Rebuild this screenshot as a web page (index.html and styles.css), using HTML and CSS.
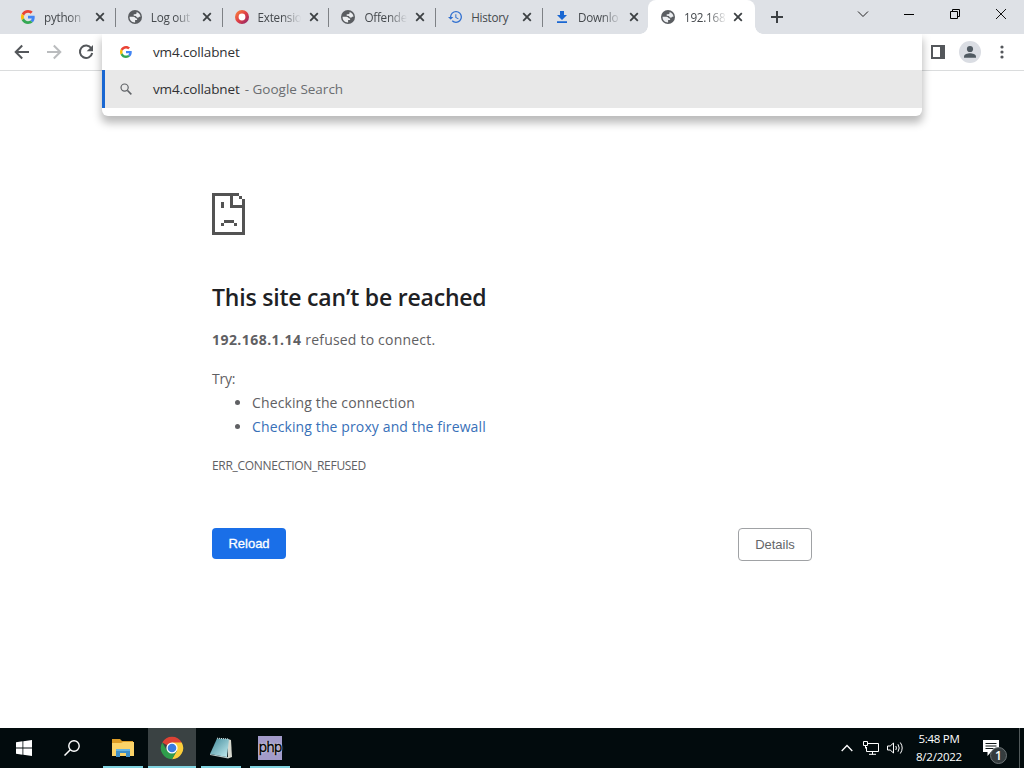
FILE: index.html
```html
<!DOCTYPE html>
<html lang="en">
<head>
    <meta charset="UTF-8">
    <meta name="viewport" content="width=device-width, initial-scale=1.0">
    <title>192.168.1.14</title>
    <link rel="stylesheet" href="styles.css">
</head>
<body>
    <!-- shared icons -->
    <svg class="defs" width="0" height="0">
        <symbol id="google" viewBox="0 0 48 48">
            <path fill="#EA4335" d="M24 9.5c3.54 0 6.71 1.22 9.21 3.6l6.85-6.85C35.9 2.38 30.47 0 24 0 14.62 0 6.51 5.38 2.56 13.22l7.98 6.19C12.43 13.72 17.74 9.5 24 9.5z"/>
            <path fill="#4285F4" d="M46.98 24.55c0-1.57-.15-3.09-.38-4.55H24v9.02h12.94c-.58 2.96-2.26 5.48-4.78 7.18l7.73 6c4.51-4.18 7.09-10.36 7.09-17.65z"/>
            <path fill="#FBBC05" d="M10.53 28.59A14.5 14.5 0 0 1 9.77 24c0-1.6.27-3.14.76-4.59l-7.98-6.19A23.9 23.9 0 0 0 0 24c0 3.88.92 7.54 2.56 10.78l7.97-6.19z"/>
            <path fill="#34A853" d="M24 48c6.48 0 11.93-2.13 15.89-5.81l-7.73-6c-2.15 1.45-4.92 2.3-8.16 2.3-6.26 0-11.57-4.22-13.47-9.91l-7.98 6.19C6.51 42.62 14.62 48 24 48z"/>
        </symbol>
        <symbol id="globe" viewBox="0 0 14 14">
            <circle cx="7" cy="7" r="7" fill="#5a5d61"/>
            <path fill="#eceef1" d="M1.600 6.800h3.900c1.600 0 1.700 1.500 2.700 1.700h.9v1.600H7.100v2.300c-3.400.1-5.700-2.400-5.500-5.600z"/>
            <path fill="#eceef1" d="M8.600 1.900c2.200.6 3.700 2.400 3.900 4.800h-1.400c-.3.900-1.200 1.100-2 .8-.7-.3-1-.9-1.100-1.500L5.700 5.700V4.300h1.500c.9 0 1.400-.5 1.400-1.200z"/>
        </symbol>
        <symbol id="close" viewBox="0 0 10 10">
            <path d="M1.200 1.200l7.600 7.600M8.800 1.200L1.200 8.800" stroke="#3c4043" stroke-width="1.800"/>
        </symbol>
    </svg>

    <header class="tab-strip">
        <div class="tabs">
            <div class="tab">
                <svg class="favicon"><use href="#google"/></svg>
                <span class="tab-title">python</span>
                <svg class="tab-close"><use href="#close"/></svg>
            </div>
            <div class="tab">
                <svg class="favicon"><use href="#globe"/></svg>
                <span class="tab-title">Log out</span>
                <svg class="tab-close"><use href="#close"/></svg>
            </div>
            <div class="tab">
                <svg class="favicon" viewBox="0 0 14 14">
                    <defs>
                        <linearGradient id="ring" x1="0" y1="0" x2="1" y2="1">
                            <stop offset="0" stop-color="#f5793f"/>
                            <stop offset=".5" stop-color="#df3f46"/>
                            <stop offset="1" stop-color="#9c2a63"/>
                        </linearGradient>
                    </defs>
                    <circle cx="7" cy="7" r="5.200" fill="#fff" stroke="url(#ring)" stroke-width="3.600"/>
                </svg>
                <span class="tab-title">Extensio</span>
                <svg class="tab-close"><use href="#close"/></svg>
            </div>
            <div class="tab">
                <svg class="favicon"><use href="#globe"/></svg>
                <span class="tab-title">Offende</span>
                <svg class="tab-close"><use href="#close"/></svg>
            </div>
            <div class="tab">
                <svg class="favicon" viewBox="1 2.500 21 19">
                    <path fill="#2f6fd0" d="M13 3a9 9 0 0 0-9 9H1l3.890 3.890.07.14L9 12H6c0-3.870 3.130-7 7-7s7 3.130 7 7-3.130 7-7 7c-1.930 0-3.680-.79-4.940-2.060l-1.420 1.420A8.950 8.950 0 0 0 13 21a9 9 0 0 0 0-18zm-1 5v5l4.280 2.540.72-1.210-3.500-2.080V8H12z"/>
                </svg>
                <span class="tab-title full">History</span>
                <svg class="tab-close"><use href="#close"/></svg>
            </div>
            <div class="tab last">
                <svg class="favicon" viewBox="0 0 14 14">
                    <path fill="#1a67d2" d="M5 1h4v4h3L7 10 2 5h3zM2 11.300h10V13H2z"/>
                </svg>
                <span class="tab-title">Downlo</span>
                <svg class="tab-close"><use href="#close"/></svg>
            </div>
            <div class="tab active">
                <svg class="favicon"><use href="#globe"/></svg>
                <span class="tab-title">192.168</span>
                <svg class="tab-close"><use href="#close"/></svg>
            </div>
        </div>
        <svg class="new-tab" viewBox="0 0 12 12"><path d="M6 0v12M0 6h12" stroke="#3c4043" stroke-width="2"/></svg>
        <div class="window-controls">
            <svg viewBox="0 0 12 12"><path d="M1 3.500l5 5 5-5" fill="none" stroke="#222"/></svg>
            <svg viewBox="0 0 12 12"><path d="M1 6.500h10" stroke="#000"/></svg>
            <svg viewBox="0 0 12 12"><path d="M1.500 3.500h7v7h-7zM3.500 3.500v-2h7v7h-2" fill="none" stroke="#000"/></svg>
            <svg viewBox="0 0 12 12"><path d="M1 1l10 10M11 1L1 11" stroke="#111"/></svg>
        </div>
    </header>

    <nav class="toolbar">
        <div class="nav-buttons">
            <svg viewBox="0 0 16 16"><path d="M15 8H2M8.200 1.500L1.700 8l6.500 6.500" fill="none" stroke="#54575b" stroke-width="2"/></svg>
            <svg viewBox="0 0 16 16"><path d="M1 8h13M7.800 1.500L14.300 8l-6.500 6.500" fill="none" stroke="#babcbe" stroke-width="2"/></svg>
            <svg viewBox="0 0 16 16">
                <path d="M13.300 4.300A6.200 6.200 0 1 0 14.200 9" fill="none" stroke="#54575b" stroke-width="2"/>
                <path d="M15 1v6.300H8.700z" fill="#54575b"/>
            </svg>
        </div>
        <div class="omnibox">
            <div class="omnibox-row">
                <svg class="omnibox-icon"><use href="#google"/></svg>
                <span>vm4.collabnet</span>
            </div>
            <div class="omnibox-row selected">
                <svg class="omnibox-icon" viewBox="0 0 13 13">
                    <path d="M8 8l4.300 4.300" stroke="#606367" stroke-width="1.600"/>
                    <circle cx="5" cy="5" r="3.900" fill="none" stroke="#606367" stroke-width="1.300"/>
                </svg>
                <span>vm4.collabnet</span>
                <span class="hint">- Google Search</span>
            </div>
        </div>
        <div class="toolbar-right">
            <svg class="side-panel" viewBox="0 0 14 14"><path fill="#54575b" fill-rule="evenodd" d="M0 0h14v14H0zM2 2v10h7V2z"/></svg>
            <svg class="avatar" viewBox="0 0 22 22">
                <circle cx="11" cy="11" r="11" fill="#dadde3"/>
                <circle cx="11" cy="8" r="3.100" fill="#505a62"/>
                <path fill="#505a62" d="M5 16.800v-1.300c0-2.300 3.600-3.300 6-3.300s6 1 6 3.300v1.300z"/>
            </svg>
            <svg class="more" viewBox="0 0 4 14" fill="#54575b"><circle cx="2" cy="2" r="1.600"/><circle cx="2" cy="7" r="1.600"/><circle cx="2" cy="12" r="1.600"/></svg>
        </div>
    </nav>

    <main class="error-page">
        <svg class="sad-page" viewBox="0 0 33 42" shape-rendering="crispEdges">
            <path fill="#535353" d="M0 0h27v3H3v36h27V15H18V3h3v9h9V6h3v36H0zM27 3h3v3h-3zM9 9h3v6H9zM12 27h10v3H12zM9 30h3v3H9zM22 30h3v3h-3z"/>
        </svg>
        <h1>This site can’t be reached</h1>
        <p class="summary"><strong>192.168.1.14</strong> refused to connect.</p>
        <p class="try">Try:</p>
        <ul>
            <li>Checking the connection</li>
            <li><a class="proxy">Checking the proxy and the firewall</a></li>
        </ul>
        <div class="error-code">ERR_CONNECTION_REFUSED</div>
        <div class="buttons">
            <button class="reload">Reload</button>
            <button class="details">Details</button>
        </div>
    </main>

    <footer class="taskbar">
        <div class="task start">
            <svg width="16" height="16" viewBox="0 0 16 16"><path fill="#fff" d="M0 2.200l6.500-.9v6.200H0zM7.300 1.200L16 0v7.500H7.300zM0 8.400h6.500v6.300L0 13.800zM7.300 8.400H16V16l-8.700-1.200z"/></svg>
        </div>
        <div class="task search">
            <svg width="16" height="16" viewBox="0 0 16 16"><circle cx="10" cy="6" r="5.200" fill="none" stroke="#fff" stroke-width="1.400"/><path d="M6.300 9.700L.5 15.500" stroke="#fff" stroke-width="1.500"/></svg>
        </div>
        <div class="task open explorer">
            <svg width="22" height="18" viewBox="0 0 22 18">
                <path fill="#dc9c26" d="M0 0h8l2 2h11v4H0z"/>
                <path fill="#fbd368" d="M0 4h9l2-1h11v14H0z"/>
                <path fill="#3f8fc6" d="M4 10h14v8h-4v-4H8v4H4z"/>
                <path fill="#65b4e2" d="M4 10h14v2H4z"/>
            </svg>
        </div>
        <div class="task open current">
            <svg width="24" height="24" viewBox="0 0 24 24">
                <path fill="#dc4235" d="M12 12L2.300 6.400A11.200 11.200 0 0 1 21.700 6.400z"/>
                <path fill="#fbcd3a" d="M12 6.400h9.700A11.200 11.200 0 0 1 12 23.200l4.900-8.400z"/>
                <path fill="#2f9d4c" d="M2.300 6.400l4.850 8.400L12 17.600l4.850-2.800L12 23.200A11.200 11.200 0 0 1 2.300 6.400z"/>
                <circle cx="12" cy="12" r="5.600" fill="#fff"/>
                <circle cx="12" cy="12" r="4.300" fill="#3a7be0"/>
            </svg>
        </div>
        <div class="task open notepad">
            <svg width="24" height="22" viewBox="0 0 24 22">
                <defs>
                    <linearGradient id="note" x1="0" y1="0" x2="1" y2="1">
                        <stop offset="0" stop-color="#3f8797"/>
                        <stop offset="1" stop-color="#c5eef2"/>
                    </linearGradient>
                </defs>
                <path fill="#d6d8ce" d="M19 2l3 1 1 17-4 1.500z"/>
                <path fill="#b9c8c8" d="M1 17l18 3v1.500L1 18z"/>
                <path fill="url(#note)" d="M8 1.500L20 2l-2 18L1 17z"/>
                <path d="M8 1.200l12 .8" stroke="#d7e5e5" stroke-dasharray="1 1"/>
            </svg>
        </div>
        <div class="task open php">
            <span class="php-icon">php</span>
        </div>

        <div class="tray">
            <svg class="tray-up" viewBox="0 0 12 8"><path d="M.7 7L6 1.500 11.300 7" fill="none" stroke="#fff" stroke-width="1.300"/></svg>
            <svg class="tray-net" viewBox="0 0 16 14">
                <path d="M5 2.500h10.500v8H3.500V6M9.500 10.500v3M6 13.300h7" fill="none" stroke="#fff"/>
                <path d="M.5.500h4v4h-4zM2.500 4.500v3" fill="none" stroke="#fff"/>
            </svg>
            <svg class="tray-sound" viewBox="0 0 17 14" fill="none" stroke="#fff">
                <path d="M.5 5h2.700L6.500 2v10L3.200 9H.5z"/>
                <path d="M8.800 5q1.200 2 0 4M11 3.300q2.400 3.700 0 7.400M13.300 1.500q3.800 5.500 0 11"/>
            </svg>
            <div class="clock"><span>5:48 PM</span><span>8/2/2022</span></div>
            <div class="notifications">
                <svg width="16" height="16" viewBox="0 0 16 16"><path fill="#fff" d="M0 0h16v12H8l-3.500 4v-4H0z"/><path d="M2.500 3.500h11M2.500 6h11M2.500 8.500h8" stroke="#101818"/></svg>
                <span class="badge">1</span>
            </div>
        </div>
    </footer>
</body>
</html>
```
FILE: styles.css
```css
* {
    box-sizing: border-box;
}
body {
    margin: 0;
    height: 768px;
    display: flex;
    flex-direction: column;
    overflow: hidden;
    font-family: "Open Sans", "Noto Sans", sans-serif;
    background: #fff;
}
svg {
    display: block;
    flex: none;
}
.defs {
    position: absolute;
}

/* tabs */
.tab-strip {
    height: 34px;
    display: flex;
    background: #dee1e6;
    padding-left: 9px;
}
.tabs {
    display: flex;
}
.tab {
    width: 106.800px;
    height: 34px;
    display: flex;
    align-items: center;
    padding-left: 12px;
    background: linear-gradient(#7e8185, #7e8185) right 0 top 8px / 1px 19px no-repeat;
}
.tab.last,
.tab.active {
    background-image: none;
}
.tab.active {
    position: relative;
    width: 107px;
    margin-left: -1.800px;
    padding-left: 13px;
    background-color: #fff;
    border-radius: 8px 8px 0 0;
}
.tab.active::before,
.tab.active::after {
    content: "";
    position: absolute;
    bottom: 0;
    width: 8px;
    height: 8px;
}
.tab.active::before {
    left: -8px;
    background: radial-gradient(circle at 0 0, transparent 7.500px, #fff 8px);
}
.tab.active::after {
    right: -8px;
    background: radial-gradient(circle at 100% 0, transparent 7.500px, #fff 8px);
}
.favicon {
    width: 14px;
    height: 14px;
}
.tab-title {
    width: 44px;
    margin-left: 9px;
    white-space: nowrap;
    font-size: 11.700px;
    line-height: 18px;
    letter-spacing: -0.25px;
    color: #45494d;
    -webkit-mask-image: linear-gradient(90deg, #000 55%, transparent 98%);
    mask-image: linear-gradient(90deg, #000 55%, transparent 98%);
}
.tab-title.full {
    -webkit-mask-image: none;
    mask-image: none;
}
.tab-close {
    width: 10px;
    height: 10px;
    margin-left: 7px;
}
.tab.active .tab-close {
    margin-left: 5px;
}
.new-tab {
    width: 12px;
    height: 12px;
    margin: 11px 0 0 16px;
}
.window-controls {
    display: flex;
    gap: 34px;
    margin: 8px 17px 0 auto;
}
.window-controls svg {
    width: 12px;
    height: 12px;
}

/* toolbar */
.toolbar {
    position: relative;
    height: 37px;
    display: flex;
    align-items: center;
    justify-content: space-between;
    border-bottom: 1px solid #dadcdd;
    padding: 0 20px 0 14px;
}
.nav-buttons {
    display: flex;
    gap: 16px;
}
.nav-buttons svg {
    width: 16px;
    height: 16px;
}
.omnibox {
    position: absolute;
    left: 102px;
    top: 0;
    width: 820px;
    height: 82px;
    background: #fff;
    border-radius: 0 0 6px 6px;
    box-shadow: 0 6px 9px 1px rgba(0, 0, 0, 0.27);
    clip-path: inset(0 -20px -30px -20px);
}
.omnibox-row {
    height: 36px;
    display: flex;
    align-items: center;
    padding-left: 18px;
    font-size: 13.500px;
    letter-spacing: -0.13px;
    color: #303134;
}
.omnibox-row.selected {
    height: 38px;
    padding-left: 15px;
    background: #e8e8e8;
    border-left: 3px solid #1967d2;
}
.omnibox-icon {
    width: 12px;
    height: 12px;
    margin-right: 21px;
}
.hint {
    margin-left: 5px;
    letter-spacing: 0;
    color: #6a6d70;
}
.toolbar-right {
    display: flex;
    align-items: center;
}
.side-panel {
    width: 14px;
    height: 14px;
    margin-right: 14px;
}
.avatar {
    width: 22px;
    height: 22px;
    margin-right: 19px;
}
.more {
    width: 4px;
    height: 14px;
}

/* error page */
.error-page {
    flex: 1;
    width: 600px;
    margin: 0 auto;
    padding-top: 122px;
    font-size: 14px;
    line-height: 24px;
    letter-spacing: 0.12px;
    color: #5f6063;
}
.sad-page {
    width: 33px;
    height: 42px;
}
h1 {
    margin: 44px 0 0;
    font-size: 23px;
    font-weight: 600;
    line-height: 36px;
    letter-spacing: -0.2px;
    color: #202124;
}
p {
    margin: 13px 0 0;
}
p.summary {
    letter-spacing: 0.2px;
}
p.summary strong {
    letter-spacing: 0.45px;
}
p.try {
    margin-top: 15px;
    letter-spacing: -0.2px;
}
ul {
    margin: 0;
    padding-left: 40px;
}
.proxy {
    color: #3870b8;
}
.error-code {
    margin-top: 15px;
    font-size: 12px;
    letter-spacing: -0.3px;
}
.buttons {
    display: flex;
    justify-content: space-between;
    align-items: flex-start;
    margin-top: 50px;
}
button {
    width: 74px;
    padding: 0;
    border-radius: 4px;
    font-family: "Liberation Sans", Arial, sans-serif;
    font-size: 13px;
}
.reload {
    height: 31px;
    border: 0;
    background: #1a6fe8;
    color: #fff;
    -webkit-text-stroke: 0.3px #fff;
}
.details {
    height: 33px;
    border: 1px solid #a0a2a5;
    background: #fff;
    color: #646669;
}

/* taskbar */
.taskbar {
    height: 40px;
    display: flex;
    background: #020b0d;
    color: #fff;
}
.task {
    width: 48px;
    height: 40px;
    display: flex;
    align-items: center;
    justify-content: center;
}
.task.open {
    width: 40px;
    margin-left: 7px;
    border-bottom: 2px solid #80d3e0;
    padding-top: 2px;
}
.task.current {
    width: 48px;
    margin-left: 5px;
    background: #3a4243;
}
.task.notepad {
    margin-left: 5px;
}
.task.php {
    margin-left: 9px;
}
.php-icon {
    width: 24px;
    height: 24px;
    background: #a29bc9;
    color: #000;
    font-family: "DejaVu Sans", sans-serif;
    font-size: 13.500px;
    line-height: 23px;
    text-align: center;
    letter-spacing: -0.9px;
    text-shadow: 0 0 1px #fff, 0 0 2px #fff;
    -webkit-text-stroke: 0.3px #000;
}
.tray {
    display: flex;
    align-items: center;
    margin-left: auto;
    margin-right: 4px;
    border-right: 1px solid #51595a;
}
.tray-up {
    width: 12px;
    height: 8px;
    margin-right: 10px;
}
.tray-net {
    width: 16px;
    height: 14px;
    margin-right: 8px;
}
.tray-sound {
    width: 17px;
    height: 14px;
    margin-right: 7px;
}
.clock {
    width: 56px;
    display: flex;
    flex-direction: column;
    align-items: center;
    font-size: 11.500px;
    line-height: 18px;
    letter-spacing: -0.25px;
}
.notifications {
    position: relative;
    margin: 0 20px 0 16px;
}
.badge {
    position: absolute;
    left: 7px;
    top: 7px;
    width: 17px;
    height: 17px;
    border: 1px solid #6c7476;
    border-radius: 50%;
    background: #353c3e;
    font-size: 12px;
    font-weight: 600;
    line-height: 15px;
    text-align: center;
}
```
